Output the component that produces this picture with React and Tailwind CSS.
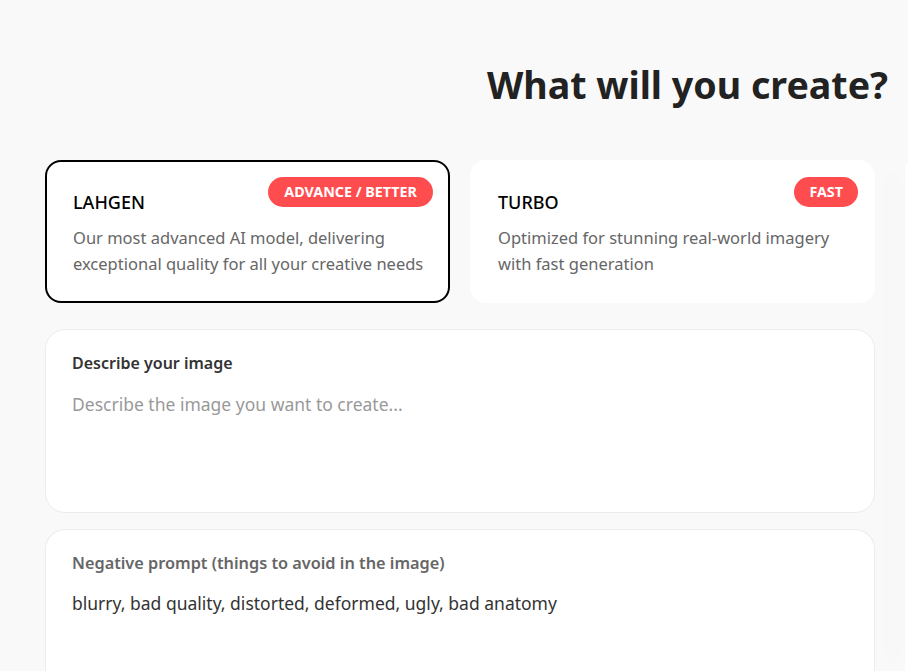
export default function App() {
  return (
    <div
      className="w-[908px] h-[671px] overflow-hidden bg-[#f9f9f9] flex flex-col text-[#222]"
      style={{ fontFamily: '"Noto Sans", "Open Sans", sans-serif' }}
    >
      <h1 className="pt-[61px] pr-[20px] text-right text-[37.6px] leading-[48px] font-bold text-[#222]">
        What will you create?
      </h1>

      <div className="mt-[51px] flex flex-1">
        <div className="w-[905px] shrink-0 pl-[45px] pr-[30px] flex flex-col">
          <div className="grid grid-cols-2 gap-5">
            <div className="relative h-[143px] rounded-2xl border-2 border-black bg-white pl-[26px] pr-[20px] pt-[27px]">
              <span className="absolute top-[15px] right-[15px] h-[30px] px-[16px] rounded-full bg-[#ff4d4f] text-white text-[14.3px] font-bold leading-[30px]">
                ADVANCE / BETTER
              </span>
              <div className="text-[18px] font-medium leading-[26px] text-black">LAHGEN</div>
              <p className="mt-[10px] text-[16.5px] leading-[26px] text-[#666]">
                Our most advanced AI model, delivering exceptional quality for all your creative needs
              </p>
            </div>
            <div className="relative h-[143px] rounded-2xl bg-white pl-[28px] pr-[22px] pt-[29px]">
              <span className="absolute top-[17px] right-[17px] h-[30px] px-[15px] rounded-full bg-[#ff4d4f] text-white text-[14.3px] font-bold leading-[30px]">
                FAST
              </span>
              <div className="text-[18px] font-medium leading-[26px] text-black">TURBO</div>
              <p className="mt-[10px] text-[16.5px] leading-[26px] text-[#666]">
                Optimized for stunning real-world imagery with fast generation
              </p>
            </div>
          </div>

          <div className="mt-[26px] h-[184px] rounded-[20px] border border-[#ececec] bg-white px-[26px] pt-[20px]">
            <div className="text-[16px] font-semibold leading-[26px] text-[#333]">Describe your image</div>
            <div className="mt-[15px] text-[17.5px] leading-[26px] text-[#999]">
              Describe the image you want to create...
            </div>
          </div>

          <div className="mt-[16px] flex-1 rounded-t-[20px] border border-b-0 border-[#ececec] bg-white px-[26px] pt-[20px]">
            <div className="text-[16.3px] font-semibold leading-[26px] text-[#666]">
              Negative prompt (things to avoid in the image)
            </div>
            <div className="mt-[14px] text-[17.5px] leading-[26px] text-[#333]">
              blurry, bad quality, distorted, deformed, ugly, bad anatomy
            </div>
          </div>
        </div>

        <div className="flex-1 mt-[3px] rounded-tl-2xl bg-white shadow-[-14px_0_24px_rgba(0,0,0,0.05)]" />
      </div>
    </div>
  )
}
